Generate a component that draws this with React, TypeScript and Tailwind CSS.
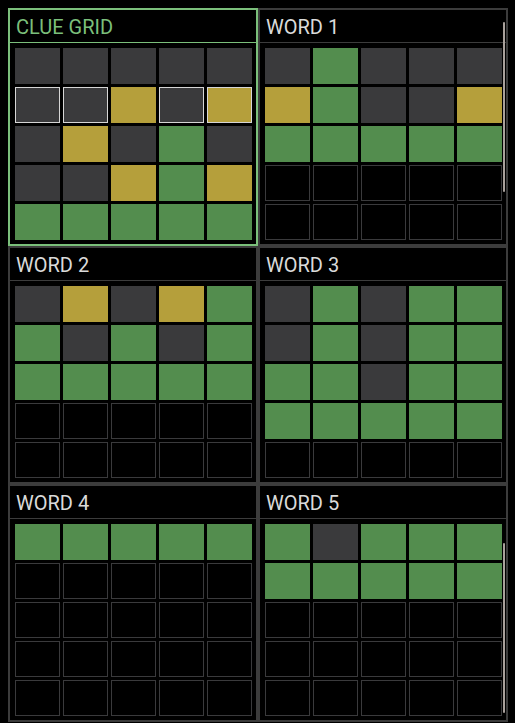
type Cell = "D" | "Y" | "G" | "E";

type Board = {
    title: string;
    rows: string[];
    clue?: boolean;
    /** [top, height] of the scrollbar thumb in panel coordinates */
    thumb?: [number, number];
};

const boards: Board[] = [
    { title: "CLUE GRID", rows: ["DDDDD", "ddYdy", "DYDGD", "DDYGY", "GGGGG"], clue: true },
    { title: "WORD 1", rows: ["DGDDD", "YGDDY", "GGGGG", "EEEEE", "EEEEE"], thumb: [12, 170] },
    { title: "WORD 2", rows: ["DYDYG", "GDGDG", "GGGGG", "EEEEE", "EEEEE"] },
    { title: "WORD 3", rows: ["DGDGG", "DGDGG", "GGDGG", "GGGGG", "EEEEE"] },
    { title: "WORD 4", rows: ["GGGGG", "EEEEE", "EEEEE", "EEEEE", "EEEEE"] },
    { title: "WORD 5", rows: ["GDGGG", "GGGGG", "EEEEE", "EEEEE", "EEEEE"], thumb: [57, 170] },
];

function Tile({ code }: { code: string }) {
    const kind = code.toUpperCase() as Cell;
    const marked = code !== code.toUpperCase();
    let cls = "bg-black border-[#3a3a3c]";
    if (kind === "D") cls = "bg-[#3a3a3c] border-[#3a3a3c]";
    if (kind === "Y") cls = "bg-[#b59f3b] border-[#b59f3b]";
    if (kind === "G") cls = "bg-[#538d4e] border-[#538d4e]";
    if (marked) cls = cls.replace(/border-\[#[0-9a-f]+\]/, "border-[#d6d6d6]");
    return <div className={`h-9 border ${cls}`} />;
}

function Panel({ board }: { board: Board }) {
    const edge = board.clue ? "border-[#7bbf7b]" : "border-[#3c3c3c]";
    return (
        <section className={`relative h-[238px] border-2 bg-black ${edge}`}>
            <header className={`flex h-[33px] items-center border-b px-[6px] pt-[1px] ${edge}`}>
                <h2
                    className={`text-[20px] leading-none ${
                        board.clue ? "text-[#7bbf7b]" : "text-[#dadada]"
                    }`}
                >
                    {board.title}
                </h2>
            </header>
            <div className="grid grid-cols-5 gap-[3px] pt-[5px] pr-[4px] pl-[5px]">
                {board.rows.map((row, r) =>
                    row.split("").map((c, i) => <Tile key={`${r}-${i}`} code={c} />),
                )}
            </div>
            {board.thumb ? (
                <div
                    className="absolute right-[1px] w-[2px] rounded-full bg-[#a9a19c]"
                    style={{ top: board.thumb[0], height: board.thumb[1] }}
                />
            ) : null}
        </section>
    );
}

export default function App() {
    return (
        <div
            className="h-[723px] overflow-hidden bg-black pt-2 pl-2"
            style={{ fontFamily: "Roboto, 'Liberation Sans', sans-serif" }}
        >
            <div className="grid w-[500px] grid-cols-2">
                {boards.map((b) => (
                    <Panel key={b.title} board={b} />
                ))}
            </div>
        </div>
    );
}
